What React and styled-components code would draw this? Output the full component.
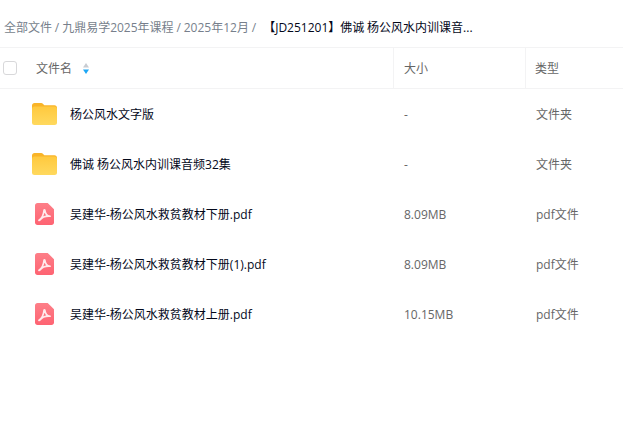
import React from "react";
import styled, { createGlobalStyle } from "styled-components";

const GlobalStyle = createGlobalStyle`
  html, body {
    margin: 0;
    padding: 0;
    background: #fff;
    font-family: "Open Sans", "Noto Sans CJK SC", sans-serif;
    font-size: 12px;
  }
`;

const Page = styled.div`
  width: 623px;
  height: 421px;
  overflow: hidden;
  background: #fff;
`;

const Breadcrumb = styled.div`
  display: flex;
  align-items: center;
  height: 47px;
  padding: 7px 0 0 4px;
  box-sizing: border-box;
  color: #777f8c;
  white-space: nowrap;
  word-spacing: -0.25px;
`;

const Current = styled.span`
  color: #03081a;
  margin-left: 7px;
`;

const Grid = styled.div`
  display: grid;
  grid-template-columns: 394px 132px 97px;
`;

const HeadCell = styled.div`
  display: flex;
  align-items: center;
  height: 42px;
  padding-left: ${(p) => p.$pad}px;
  box-sizing: border-box;
  border-top: 1px solid #f3f3f4;
  border-bottom: 1px solid #f3f3f4;
  border-right: ${(p) => (p.$divider ? "1px solid #f3f3f4" : "0")};
  color: #666;
`;

const Checkbox = styled.span`
  width: 12px;
  height: 12px;
  border: 1px solid #d8d8da;
  border-radius: 3px;
  margin-right: 19px;
`;

const SortIcon = styled.svg`
  width: 6px;
  height: 11px;
  margin-left: 11px;
`;

const NameCell = styled.div`
  display: flex;
  align-items: center;
  height: 50px;
  padding-left: ${(p) => p.$pad}px;
  color: #03081a;
`;

const IconSlot = styled.span`
  display: flex;
  width: 26px;
  height: 24px;
  margin-right: 13px;
  justify-content: center;
  align-items: center;
`;

const InfoCell = styled.div`
  display: flex;
  align-items: center;
  height: 50px;
  padding-left: 10px;
  color: #666;
`;

const FolderIcon = () => (
  <svg width="25" height="22" viewBox="0 0 25 22">
    <defs>
      <linearGradient id="folderBody" x1="0" y1="0" x2="0" y2="1">
        <stop offset="0" stopColor="#ffc93e" />
        <stop offset="1" stopColor="#ffd95e" />
      </linearGradient>
    </defs>
    <path d="M2.500 0h6.600c.9 0 1.400.4 2 1l1.200 1.200h10.200c1.400 0 2.500 1.100 2.500 2.500V8H0V2.500C0 1.100 1.100 0 2.500 0z" fill="#f9b428" />
    <rect x="0" y="3.500" width="25" height="18.500" rx="2.500" fill="url(#folderBody)" />
  </svg>
);

const PdfIcon = () => (
  <svg width="19" height="22" viewBox="0 0 19 22">
    <defs>
      <linearGradient id="pdfBody" x1="0" y1="0" x2="0" y2="1">
        <stop offset="0" stopColor="#fd7f88" />
        <stop offset="1" stopColor="#fe6372" />
      </linearGradient>
    </defs>
    <path d="M2.500 0h10.200L19 6.200v13.300c0 1.400-1.100 2.500-2.500 2.500h-14C1.100 22 0 20.900 0 19.500v-17C0 1.100 1.100 0 2.500 0z" fill="url(#pdfBody)" />
    <path d="M4 17.200c2.500-1.400 4.500-5.300 5-9.800.1-.8.800-.8.900 0 .4 3.500 2.100 5.600 5.300 5.800-3.400-.3-7.800.6-10.200 3.700-.5.600-1.400.6-1 .3z" fill="none" stroke="#fff" strokeWidth="1.600" strokeLinejoin="round" opacity="0.85" />
  </svg>
);

const rows = [
  { name: "杨公风水文字版", size: "-", type: "文件夹", folder: true },
  { name: "佛诚 杨公风水内训课音频32集", size: "-", type: "文件夹", folder: true },
  { name: "吴建华-杨公风水救贫教材下册.pdf", size: "8.09MB", type: "pdf文件" },
  { name: "吴建华-杨公风水救贫教材下册(1).pdf", size: "8.09MB", type: "pdf文件" },
  { name: "吴建华-杨公风水救贫教材上册.pdf", size: "10.15MB", type: "pdf文件" },
];

export default function App() {
  return (
    <Page>
      <GlobalStyle />
      <Breadcrumb>
        全部文件 / 九鼎易学2025年课程 / 2025年12月 /
        <Current>【JD251201】佛诚 杨公风水内训课音...</Current>
      </Breadcrumb>
      <Grid>
        <HeadCell $pad={3} $divider>
          <Checkbox />
          文件名
          <SortIcon viewBox="0 0 6 11">
            <path d="M3 0l3 4.500H0z" fill="#c8ccd2" />
            <path d="M3 11L0 6.500h6z" fill="#1ea7f5" />
          </SortIcon>
        </HeadCell>
        <HeadCell $pad={10} $divider>大小</HeadCell>
        <HeadCell $pad={9}>类型</HeadCell>
        {rows.map((row) => (
          <React.Fragment key={row.name}>
            <NameCell $pad={31}>
              <IconSlot>{row.folder ? <FolderIcon /> : <PdfIcon />}</IconSlot>
              {row.name}
            </NameCell>
            <InfoCell>{row.size}</InfoCell>
            <InfoCell>{row.type}</InfoCell>
          </React.Fragment>
        ))}
      </Grid>
    </Page>
  );
}
